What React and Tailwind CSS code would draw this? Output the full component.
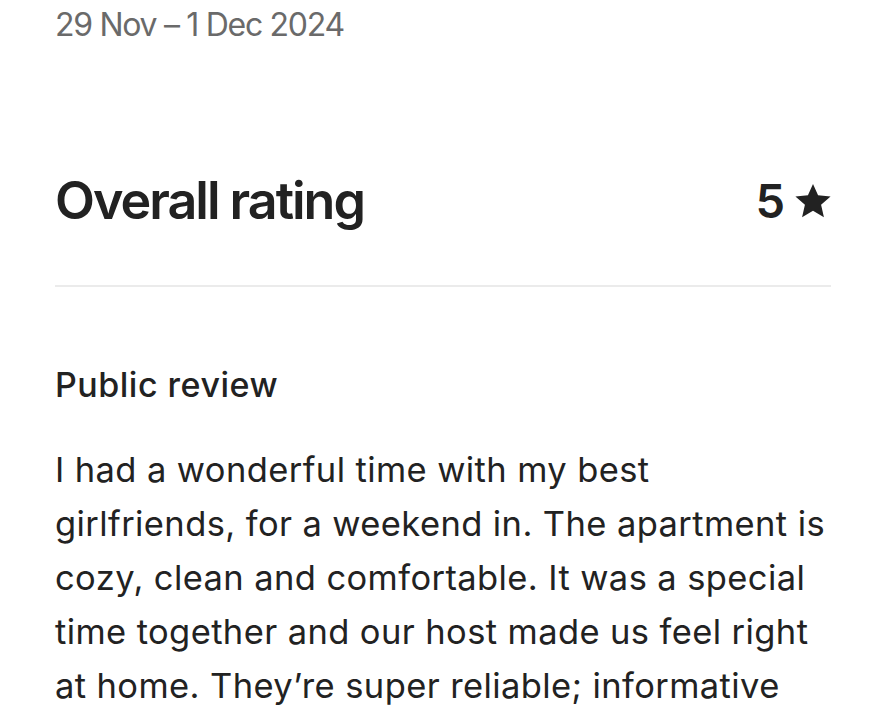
export default function App() {
  const lines = [
    "I had a wonderful time with my best",
    "girlfriends, for a weekend in. The apartment is",
    "cozy, clean and comfortable. It was a special",
    "time together and our host made us feel right",
    "at home. They\u2019re super reliable; informative",
  ];

  return (
    <div className="min-h-screen bg-white font-['Inter',sans-serif] text-[#222222] pl-[55px] pr-[56px] pt-[5px]">
      <div className="text-[32px] leading-[40px] text-[#6a6a6a] tracking-[-1.3px]">
        29 Nov – 1 Dec 2024
      </div>

      <div className="mt-[126px] flex items-center justify-between">
        <h1 className="text-[52px] leading-[60px] font-semibold tracking-[-2px]">
          Overall rating
        </h1>
        <div className="flex items-center gap-[9px] text-[47px] leading-[60px] font-semibold">
          <span>5</span>
          <svg viewBox="0 0 24 24" className="w-[38px] h-[38px] -mr-[1px]" fill="#222222">
            <path d="M12 1.2l3.2 7.2 7.9.7-6 5.3 1.8 7.8L12 18.1l-6.9 4.1 1.8-7.8-6-5.3 7.9-.7z" />
          </svg>
        </div>
      </div>

      <div className="mt-[54px] h-[2px] bg-[#ebebeb]" />

      <h2 className="mt-[78px] text-[34px] leading-[40px] font-medium tracking-[0.5px]">
        Public review
      </h2>

      <p className="mt-[38px] text-[34.5px] leading-[54px] tracking-[0.4px]">
        {lines.map((l, i) => (
          <span key={i} className="block whitespace-nowrap">
            {l}
          </span>
        ))}
      </p>
    </div>
  );
}
